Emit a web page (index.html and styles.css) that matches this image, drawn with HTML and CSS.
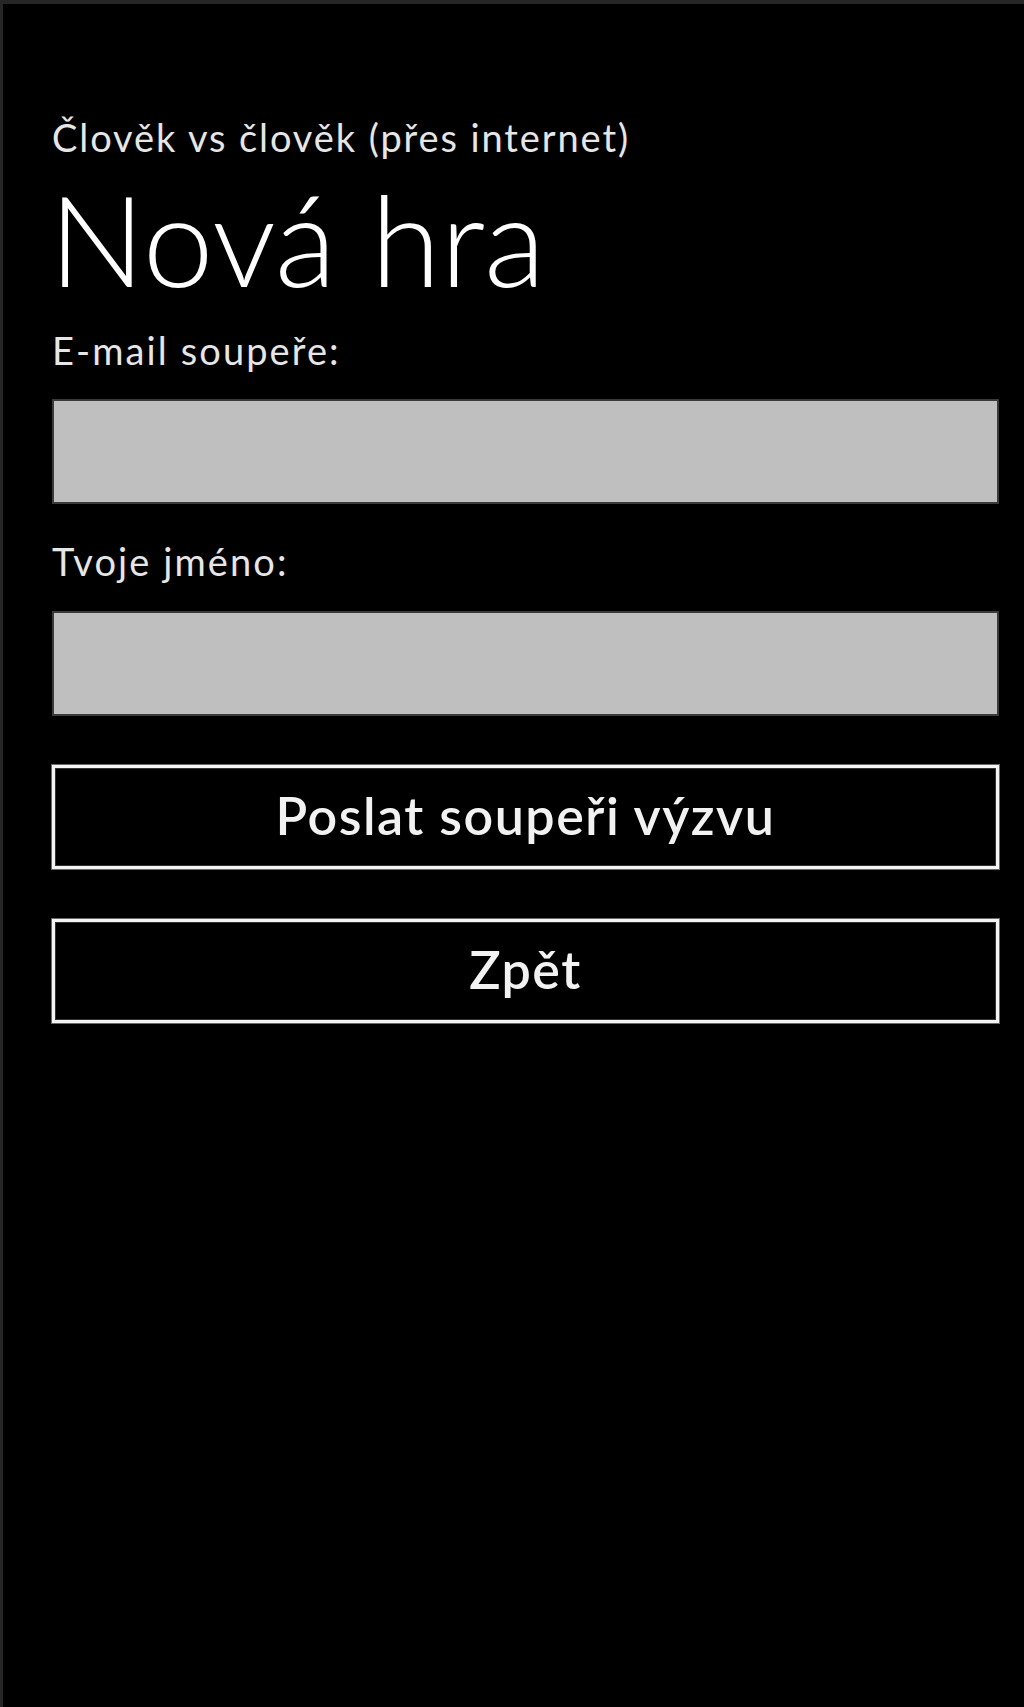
FILE: index.html
```html
<!DOCTYPE html>
<html lang="cs">
<head>
<meta charset="utf-8">
<title>Nová hra</title>
<link rel="stylesheet" href="styles.css">
</head>
<body>
<div class="frame">
  <div class="subtitle">Člověk vs člověk (přes internet)</div>
  <h1 class="title">Nová hra</h1>
  <label class="label label-first" for="email">E-mail soupeře:</label>
  <input class="field field-first" id="email" type="text">
  <label class="label label-second" for="name">Tvoje jméno:</label>
  <input class="field field-second" id="name" type="text">
  <button class="btn btn-first" type="button">Poslat soupeři výzvu</button>
  <button class="btn btn-second" type="button">Zpět</button>
</div>
</body>
</html>
```
FILE: styles.css
```css
html, body {
  margin: 0;
  padding: 0;
  background: #000;
}

.frame {
  box-sizing: border-box;
  min-height: 1707px;
  border-top: 4px solid #262626;
  border-left: 3px solid #262626;
  padding: 0 25px 0 49px;
  display: flex;
  flex-direction: column;
  font-family: Lato, "Open Sans", sans-serif;
  color: #f2f2f2;
}

.subtitle {
  margin-top: 110px;
  font-size: 38px;
  line-height: 46px;
  height: 46px;
  letter-spacing: 1.9px;
  color: #e6e6e6;
  white-space: nowrap;
}

.title {
  margin: 13px 0 0 -3px;
  font-size: 127px;
  line-height: 130px;
  height: 130px;
  font-weight: 300;
  color: #fff;
  white-space: nowrap;
}

.label {
  display: block;
  font-size: 38px;
  line-height: 46px;
  height: 46px;
  letter-spacing: 2.1px;
  color: #e6e6e6;
}

.label-first { margin-top: 24px; }
.label-second { margin-top: 34px; }

.field {
  box-sizing: border-box;
  display: block;
  width: 100%;
  height: 105px;
  margin: 0;
  background: #bfbfbf;
  border: 2px solid #3a3a3a;
  outline: none;
  border-radius: 0;
}

.field-first { margin-top: 26px; }
.field-second { margin-top: 27px; }

.btn {
  box-sizing: border-box;
  display: flex;
  align-items: center;
  justify-content: center;
  width: 100%;
  height: 104px;
  margin: 0;
  padding: 0 0 4px;
  background: #000;
  color: #f2f2f2;
  border: 3px solid #f4f4f4;
  box-shadow: 0 0 0 1px #6a6a6a, inset 0 0 0 1px #333;
  border-radius: 0;
  font-family: Lato, "Open Sans", sans-serif;
  font-size: 52px;
  font-weight: 600;
  letter-spacing: 1.5px;
}

.btn-first { margin-top: 49px; }
.btn-second { margin-top: 50px; }
```
